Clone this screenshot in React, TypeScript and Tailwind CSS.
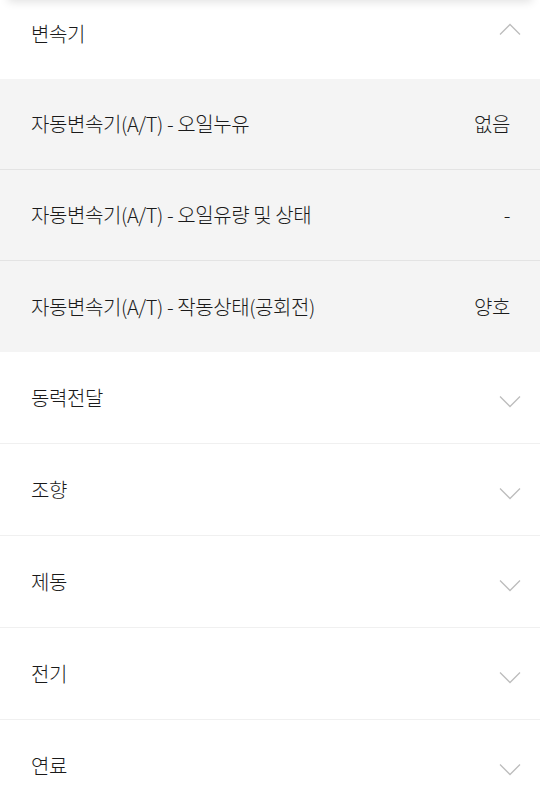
import React from 'react';

interface Item {
  label: string;
  value: string;
}

const items: Item[] = [
  { label: '자동변속기(A/T) - 오일누유', value: '없음' },
  { label: '자동변속기(A/T) - 오일유량 및 상태', value: '-' },
  { label: '자동변속기(A/T) - 작동상태(공회전)', value: '양호' },
];

const sections = ['동력전달', '조향', '제동', '전기', '연료'];

const Chevron: React.FC<{ up?: boolean }> = ({ up }) => (
  <svg width="22" height="12" viewBox="0 0 22 12" fill="none" className="shrink-0">
    {up ? (
      <path d="M1 11.5 L11 1.5 L21 11.5" stroke="#bdbdbd" strokeWidth="1.3" />
    ) : (
      <path d="M1 0.5 L11 10.5 L21 0.5" stroke="#bdbdbd" strokeWidth="1.3" />
    )}
  </svg>
);

export default function App() {
  return (
    <div
      className="relative w-[540px] min-h-[797px] bg-white overflow-hidden text-[#1a1a1a] font-light"
      style={{ fontFamily: '"Noto Sans CJK KR", "Noto Sans", sans-serif' }}
    >
      {/* shadow of the card above */}
      <div className="absolute -top-[20px] left-[8px] right-[8px] h-[20px] shadow-[0_2px_10px_rgba(0,0,0,0.12)]" />

      {/* open section */}
      <div className="flex items-start justify-between h-[79px] pl-[31px] pr-[19px] pt-[20px]">
        <span className="text-[20px] leading-[28px] tracking-[-0.4px]">변속기</span>
        <div className="pt-[3px]">
          <Chevron up />
        </div>
      </div>

      <div className="bg-[#f4f4f4]">
        {items.map((it, i) => (
          <div
            key={it.label}
            className={`flex items-center justify-between h-[91px] pl-[31px] pr-[30px] ${
              i < items.length - 1 ? 'border-b border-[#e3e3e3]' : ''
            }`}
          >
            <span className="text-[20px] tracking-[-0.4px]">{it.label}</span>
            <span className="text-[20px] tracking-[-0.4px]">{it.value}</span>
          </div>
        ))}
      </div>

      {sections.map((s) => (
        <div
          key={s}
          className="flex items-center justify-between h-[92px] pl-[31px] pr-[19px] border-b border-[#f0f0f0]"
        >
          <span className="text-[20px] tracking-[-0.4px]">{s}</span>
          <div className="pt-[9px]">
            <Chevron />
          </div>
        </div>
      ))}
    </div>
  );
}
